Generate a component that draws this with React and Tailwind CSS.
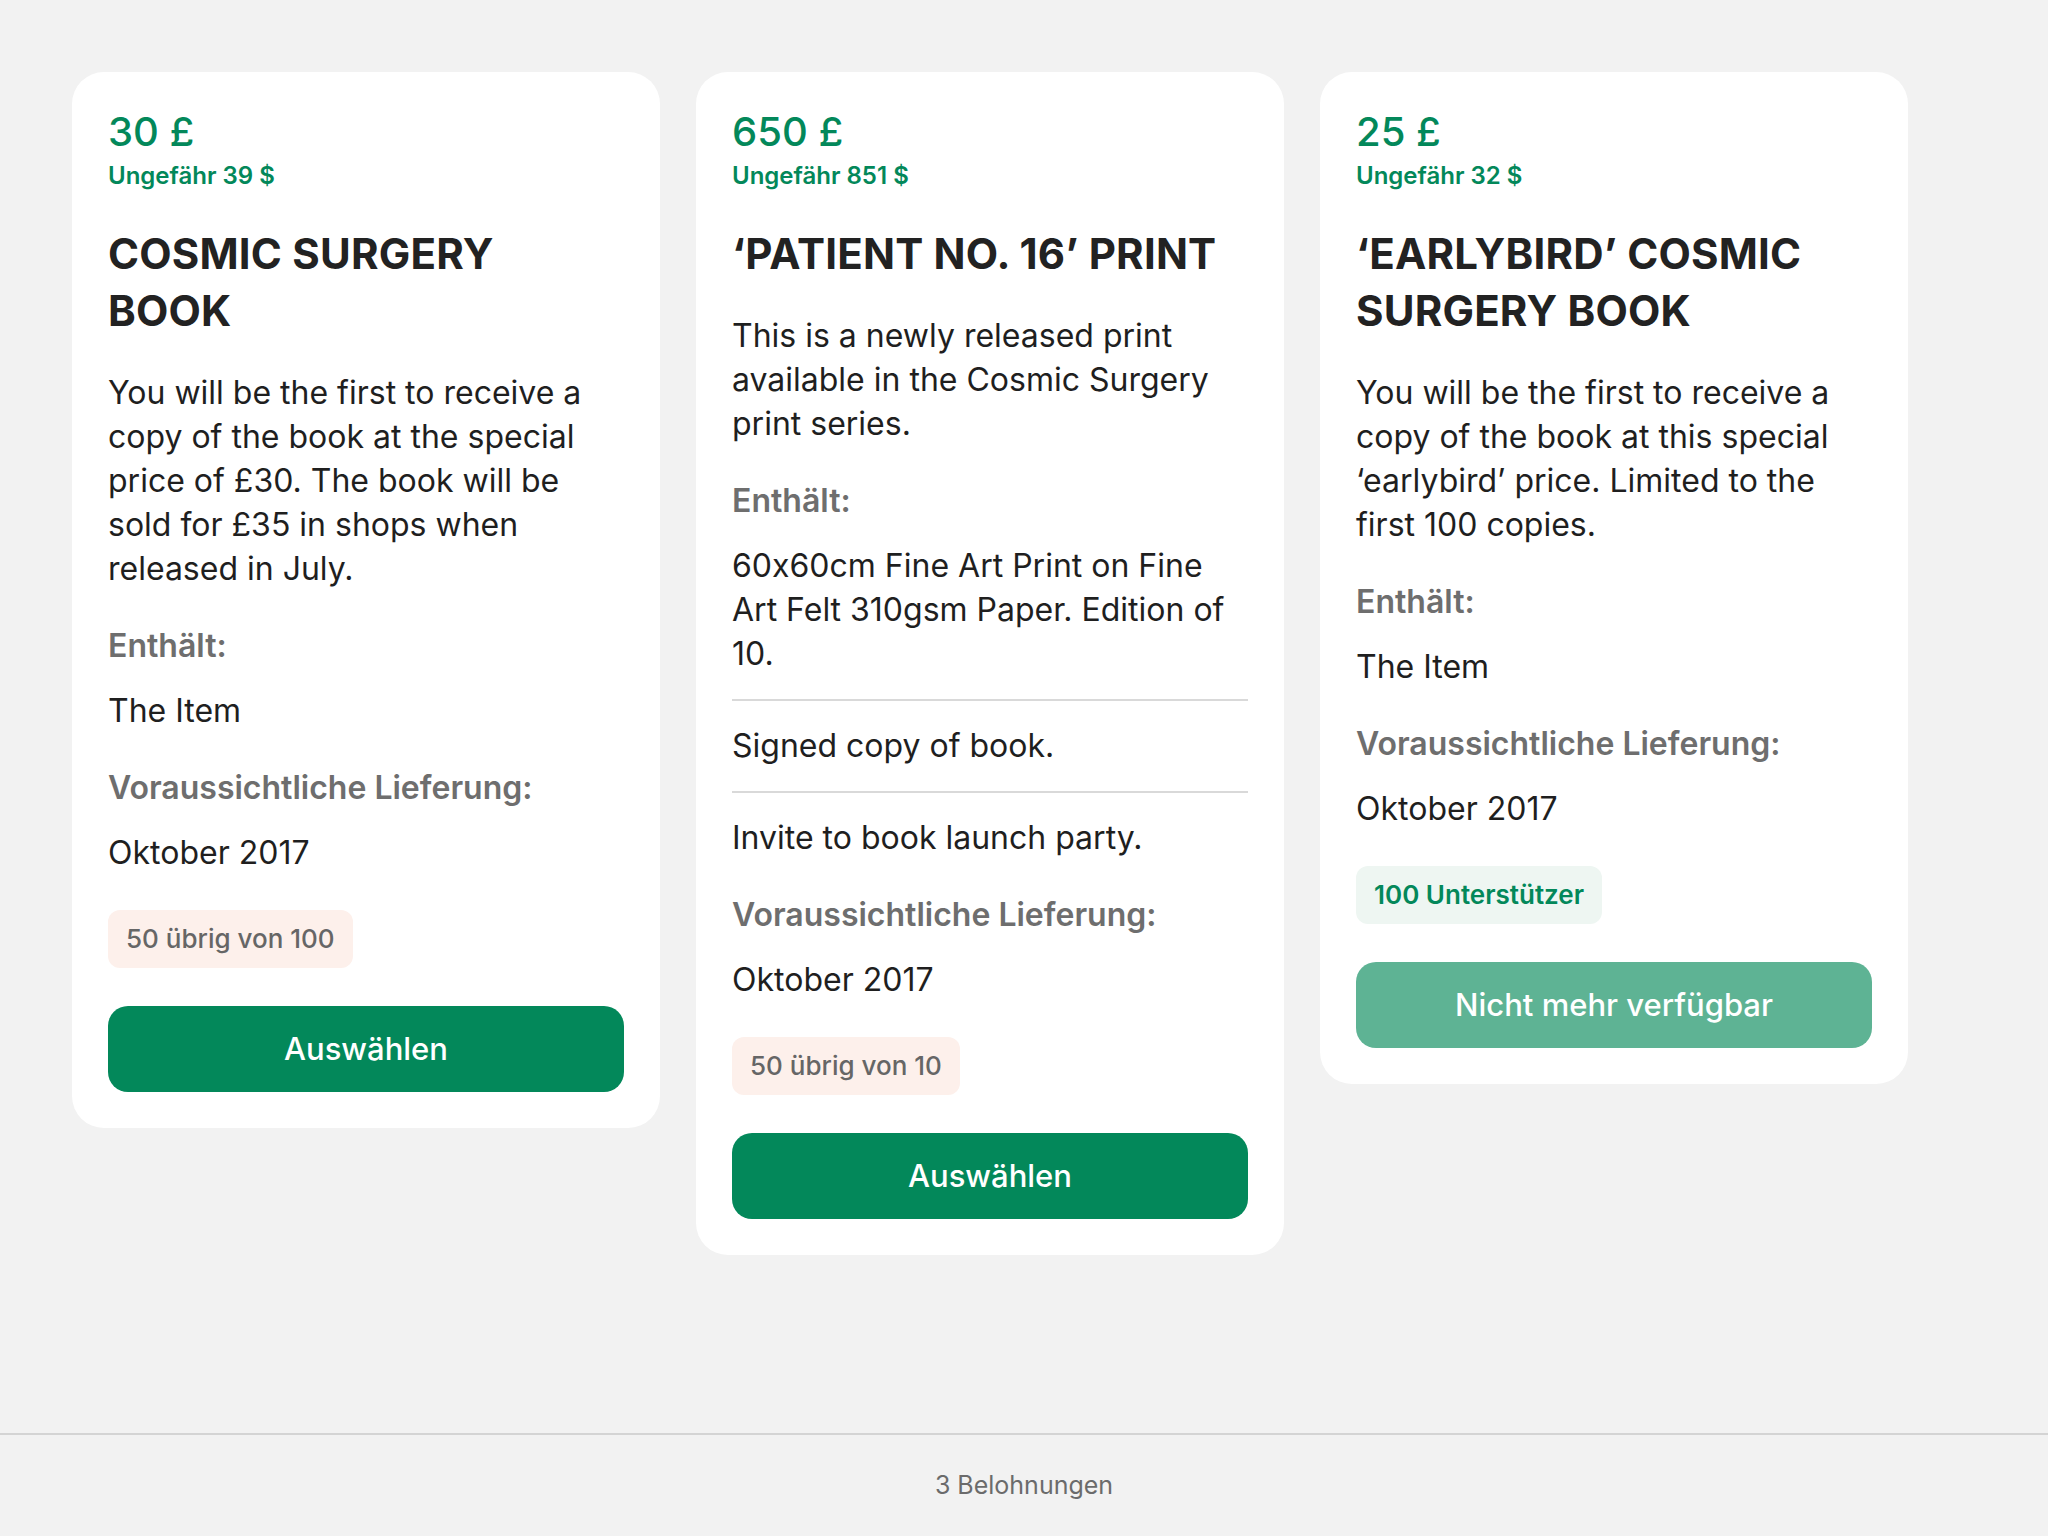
import React from 'react';

const rewards = [
  {
    price: '30 £',
    approx: 'Ungefähr 39 $',
    title: 'COSMIC SURGERY BOOK',
    body: 'You will be the first to receive a copy of the book at the special price of £30. The book will be sold for £35 in shops when released in July.',
    items: ['The Item'],
    delivery: 'Oktober 2017',
    badge: { text: '50 übrig von 100', tone: 'limit' },
    available: true,
  },
  {
    price: '650 £',
    approx: 'Ungefähr 851 $',
    title: '‘PATIENT NO. 16’ PRINT',
    body: 'This is a newly released print available in the Cosmic Surgery print series.',
    items: [
      '60x60cm Fine Art Print on Fine Art Felt 310gsm Paper. Edition of 10.',
      'Signed copy of book.',
      'Invite to book launch party.',
    ],
    delivery: 'Oktober 2017',
    badge: { text: '50 übrig von 10', tone: 'limit' },
    available: true,
  },
  {
    price: '25 £',
    approx: 'Ungefähr 32 $',
    title: '‘EARLYBIRD’ COSMIC SURGERY BOOK',
    body: 'You will be the first to receive a copy of the book at this special ‘earlybird’ price. Limited to the first 100 copies.',
    items: ['The Item'],
    delivery: 'Oktober 2017',
    badge: { text: '100 Unterstützer', tone: 'backers' },
    available: false,
  },
];

const RewardCard = ({ reward }) => {
  return (
    <div className="bg-white rounded-[32px] p-9 flex flex-col">
      {/* Price */}
      <div className="text-[40px] leading-[48px] font-medium text-[#03885a]">{reward.price}</div>
      <div className="mt-1 text-[24px] leading-8 font-semibold text-[#03885a]">{reward.approx}</div>

      <h2 className="mt-[33px] text-[42px] leading-[57px] font-bold text-[#222222] tracking-[0.2px]">
        {reward.title}
      </h2>

      <p className="mt-8 text-[32px] leading-[44px] text-[#1f1f1f]">{reward.body}</p>

      {/* Contents */}
      <div className="mt-[35px] text-[32px] leading-10 font-semibold text-[#6e6e6e]">Enthält:</div>
      <ul className="mt-[23px] divide-y-2 divide-[#d9d9d9]">
        {reward.items.map((item) => (
          <li key={item} className="py-[23px] first:pt-0 last:pb-0 text-[32px] leading-[44px] text-[#1f1f1f]">
            {item}
          </li>
        ))}
      </ul>

      <div className="mt-[35px] text-[32px] leading-10 font-semibold text-[#6e6e6e]">Voraussichtliche Lieferung:</div>
      <div className="mt-[23px] text-[32px] leading-[44px] text-[#1f1f1f]">{reward.delivery}</div>

      <div className="mt-[35px] flex">
        <span
          className={
            reward.badge.tone === 'limit'
              ? 'px-[18px] py-[13px] rounded-xl bg-[#fdf0eb] text-[26px] leading-8 font-medium text-[#666666]'
              : 'px-[18px] py-[13px] rounded-xl bg-[#eef6f2] text-[26px] leading-8 font-semibold text-[#03885a]'
          }
        >
          {reward.badge.text}
        </span>
      </div>

      <button
        className={
          reward.available
            ? 'mt-[38px] h-[86px] w-full rounded-[20px] bg-[#03885a] text-white text-[31px] font-medium'
            : 'mt-[38px] h-[86px] w-full rounded-[20px] bg-[#5eb394] text-white text-[31px] font-medium'
        }
      >
        {reward.available ? 'Auswählen' : 'Nicht mehr verfügbar'}
      </button>
    </div>
  );
};

export default function App() {
  return (
    <div
      className="min-h-screen bg-[#f2f2f2] flex flex-col [font-feature-settings:'calt'_0]"
      style={{ fontFamily: 'Inter, "Noto Sans", sans-serif' }}
    >
      <main className="flex-1 pt-[72px] pl-[72px]">
        <div className="grid grid-cols-[588px_588px_588px] gap-9 items-start">
          {rewards.map((r) => (
            <RewardCard key={r.title} reward={r} />
          ))}
        </div>
      </main>

      {/* Footer count */}
      <footer className="h-[103px] border-t-2 border-[#d4d4d4] flex items-center justify-center">
        <span className="text-[25px] text-[#6b6b6b]">3 Belohnungen</span>
      </footer>
    </div>
  );
}
